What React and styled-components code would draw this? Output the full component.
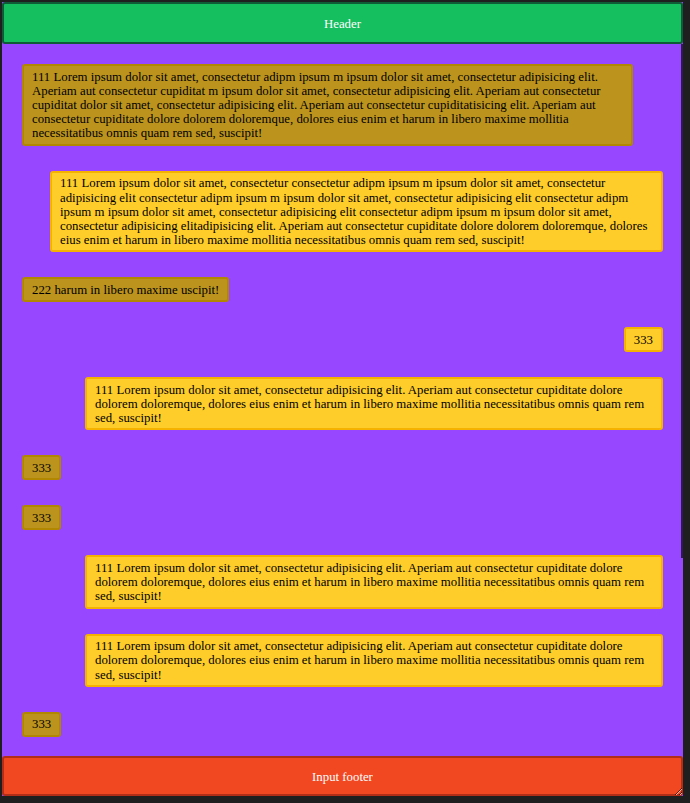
import React from "react";
import styled, { createGlobalStyle } from "styled-components";

const GlobalStyle = createGlobalStyle`
  html, body {
    margin: 0;
    padding: 0;
    background-color: #1f1f1f;
    font-family: "Liberation Serif", "Times New Roman", serif;
  }
  body {
    padding: 2px;
  }
`;

const Layout = styled.div`
  display: flex;
  flex-direction: column;
  width: 681px;
  height: 794px;
  background-color: #9747ff;
  resize: both;
  overflow: hidden;
`;

const Bar = styled.div`
  flex: 0 0 auto;
  height: ${(props) => props.$height}px;
  box-sizing: border-box;
  display: flex;
  align-items: center;
  justify-content: center;
  padding-top: 3px;
  color: #ffffff;
  font-size: 12.8px;
  background-color: ${(props) => props.$bg};
  border: 2px solid ${(props) => props.$border};
  border-radius: 3px;
`;

const ChatWrap = styled.div`
  position: relative;
  flex: 1 1 auto;
  min-height: 0;
  display: flex;
`;

const Chat = styled.div`
  flex: 1 1 auto;
  overflow-y: auto;
  display: flex;
  flex-direction: column;
  gap: 25px;
  padding: 20px;
  scrollbar-width: none;
  &::-webkit-scrollbar {
    display: none;
  }
`;

/* thin scrollbar thumb drawn over the chat edge */
const Thumb = styled.div`
  position: absolute;
  top: 0;
  right: 0;
  width: 2px;
  height: 514px;
  background: rgba(25, 12, 45, 0.8);
  pointer-events: none;
`;

const Message = styled.div`
  align-self: ${(props) => (props.$mine ? "flex-end" : "flex-start")};
  max-width: ${(props) => (props.$max ? `${props.$max}px` : "90%")};
  box-sizing: border-box;
  padding: 3.6px 8px 3.1px;
  font-size: 12.8px;
  line-height: 14.2px;
  color: #000000;
  background-color: ${(props) => (props.$mine ? "#ffcd29" : "#bc941d")};
  border: 2px solid ${(props) => (props.$mine ? "#f5b300" : "#b18600")};
  border-radius: 3px;
`;

const SHORT =
  "111 Lorem ipsum dolor sit amet, consectetur adipisicing elit. Aperiam aut consectetur cupiditate dolore dolorem doloremque, dolores eius enim et harum in libero maxime mollitia necessitatibus omnis quam rem sed, suscipit!";

const messages = [
  {
    mine: false,
    max: 611,
    text: "111 Lorem ipsum dolor sit amet, consectetur adipm ipsum m ipsum dolor sit amet, consectetur adipisicing elit. Aperiam aut consectetur cupiditat m ipsum dolor sit amet, consectetur adipisicing elit. Aperiam aut consectetur cupiditat dolor sit amet, consectetur adipisicing elit. Aperiam aut consectetur cupiditatisicing elit. Aperiam aut consectetur cupiditate dolore dolorem doloremque, dolores eius enim et harum in libero maxime mollitia necessitatibus omnis quam rem sed, suscipit!",
  },
  {
    mine: true,
    max: 613,
    text: "111 Lorem ipsum dolor sit amet, consectetur consectetur adipm ipsum m ipsum dolor sit amet, consectetur adipisicing elit consectetur adipm ipsum m ipsum dolor sit amet, consectetur adipisicing elit consectetur adipm ipsum m ipsum dolor sit amet, consectetur adipisicing elit consectetur adipm ipsum m ipsum dolor sit amet, consectetur adipisicing elitadipisicing elit. Aperiam aut consectetur cupiditate dolore dolorem doloremque, dolores eius enim et harum in libero maxime mollitia necessitatibus omnis quam rem sed, suscipit!",
  },
  { mine: false, text: "222 harum in libero maxime uscipit!" },
  { mine: true, text: "333" },
  { mine: true, max: 578, text: SHORT },
  { mine: false, text: "333" },
  { mine: false, text: "333" },
  { mine: true, max: 578, text: SHORT },
  { mine: true, max: 578, text: SHORT },
  { mine: false, text: "333" },
  { mine: true, max: 578, text: SHORT },
  { mine: false, text: "333" },
  { mine: true, max: 578, text: SHORT },
  { mine: false, text: "333" },
];

const App = () => {
  return (
    <>
      <GlobalStyle />
      <Layout>
        <Bar $height={42} $bg="#15be5f" $border="#0f5b38">
          Header
        </Bar>
        <ChatWrap>
          <Chat>
            {messages.map((m, idx) => (
              <Message key={"msg" + idx} $mine={m.mine} $max={m.max}>
                {m.text}
              </Message>
            ))}
          </Chat>
          <Thumb />
        </ChatWrap>
        <Bar $height={40} $bg="#f24822" $border="#b32e16">
          Input footer
        </Bar>
      </Layout>
    </>
  );
};

export default App;
